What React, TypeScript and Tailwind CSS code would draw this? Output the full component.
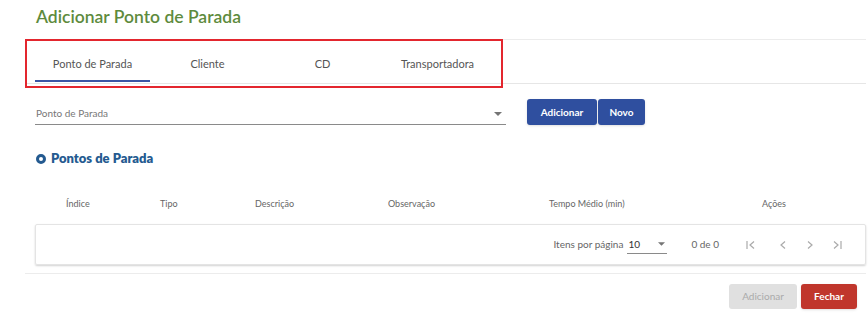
import React from "react";

export default function App() {
  const tabs = ["Ponto de Parada", "Cliente", "CD", "Transportadora"];
  const cols: [string, string][] = [
    ["Índice", "w-[125px] pl-[31px]"],
    ["Tipo", "w-[95px]"],
    ["Descrição", "w-[133px]"],
    ["Observação", "w-[161px]"],
    ["Tempo Médio (min)", "w-[213px]"],
    ["Ações", "w-[80px]"],
  ];
  return (
    <div
      className="relative w-[868px] h-[315px] bg-white overflow-hidden"
      style={{ fontFamily: "Lato, 'Noto Sans', sans-serif" }}
    >
      {/* red annotation box */}
      <div className="absolute left-[25px] top-[39px] w-[478px] h-[49px] border-2 border-[#e3262e] pointer-events-none" />

      <div className="pl-[25px] pr-[2px]">
        {/* title */}
        <div className="h-[40px] border-b border-[#ececec] pl-[11px] pt-[7px]">
          <h1 className="text-[17.5px] leading-[20px] font-semibold text-[#5e8b3d]">
            Adicionar Ponto de Parada
          </h1>
        </div>

        {/* tabs */}
        <div className="h-[44px] border-b border-[#e6e6e6] pl-[10px] flex">
          {tabs.map((t, i) => (
            <div
              key={t}
              className="w-[115px] flex items-center justify-center text-[11px] text-[#555] relative"
            >
              <span className="mt-[6px]">{t}</span>
              {i === 0 && (
                <div className="absolute left-0 right-0 bottom-[1px] h-[2px] bg-[#3a55a4]" />
              )}
            </div>
          ))}
        </div>

        {/* select row */}
        <div className="pl-[10px] pt-[15px] flex items-start">
          <div className="w-[471px] h-[26px] border-b border-[#8a8a8a] flex items-end justify-between pb-[3px] pl-[1px]">
            <span className="text-[10px] text-[#777]">Ponto de Parada</span>
            <svg width="8" height="4" viewBox="0 0 8 4" className="mr-[4px] mb-[5px]">
              <path d="M0 0 L8 0 L4 4 Z" fill="#757575" />
            </svg>
          </div>
          <button className="ml-[21px] h-[26px] w-[70px] rounded-[3px] bg-[#2f4f9f] text-white text-[10px] font-bold shadow-sm">
            Adicionar
          </button>
          <button className="ml-[1px] h-[26px] w-[47px] rounded-[3px] bg-[#2f4f9f] text-white text-[10px] font-bold shadow-sm">
            Novo
          </button>
        </div>

        {/* section heading */}
        <div className="pl-[11px] mt-[25px] flex items-center h-[18px]">
          <span className="w-[10px] h-[10px] rounded-full border-[3px] border-[#245a90]" />
          <span className="ml-[5px] text-[13px] font-extrabold text-[#245a90]">Pontos de Parada</span>
        </div>

        {/* table header */}
        <div className="ml-[10px] mt-[28px] h-[16px] flex items-center text-[9px] text-[#666]">
          {cols.map(([c, w]) => (
            <div key={c} className={w}>
              {c}
            </div>
          ))}
        </div>

        {/* card */}
        <div className="ml-[10px] mt-[12px] h-[41px] border border-[#e4e4e4] shadow-[0_1px_2px_rgba(0,0,0,0.18)] rounded-[2px] flex items-center justify-end pr-[21px] text-[10px] text-[#666]">
          <span>Itens por página</span>
          <div className="ml-[4px] w-[40px] h-[18px] border-b border-[#8a8a8a] flex items-center justify-between pl-[1px] pr-[2px]">
            <span className="text-[10px] text-[#333]">10</span>
            <svg width="7" height="4" viewBox="0 0 8 4">
              <path d="M0 0 L8 0 L4 4 Z" fill="#757575" />
            </svg>
          </div>
          <span className="ml-[24px]">0 de 0</span>
          <div className="ml-[25px] flex items-center gap-[13px] text-[#aaa]">
            <svg width="14" height="14" viewBox="0 0 14 14" fill="none" stroke="#aaa" strokeWidth="1.2" className="mr-[5px]">
              <path d="M3 3 V11" />
              <path d="M10 3.5 L6 7 L10 10.5" />
            </svg>
            <svg width="14" height="14" viewBox="0 0 14 14" fill="none" stroke="#aaa" strokeWidth="1.2">
              <path d="M9 3.5 L5 7 L9 10.5" />
            </svg>
            <svg width="14" height="14" viewBox="0 0 14 14" fill="none" stroke="#aaa" strokeWidth="1.2">
              <path d="M5 3.5 L9 7 L5 10.5" />
            </svg>
            <svg width="14" height="14" viewBox="0 0 14 14" fill="none" stroke="#aaa" strokeWidth="1.2">
              <path d="M4 3.5 L8 7 L4 10.5" />
              <path d="M11 3 V11" />
            </svg>
          </div>
        </div>

        {/* bottom line + buttons */}
        <div className="mt-[8px] border-t border-[#ececec] flex justify-end pr-[9px] pt-[10px] gap-[4px]">
          <button className="h-[25px] w-[68px] rounded-[3px] bg-[#e0e0e0] text-[#aaa] text-[10px]">
            Adicionar
          </button>
          <button className="h-[25px] w-[56px] rounded-[3px] bg-[#c0362c] text-white text-[10px] font-bold shadow-sm">
            Fechar
          </button>
        </div>
      </div>
    </div>
  );
}
